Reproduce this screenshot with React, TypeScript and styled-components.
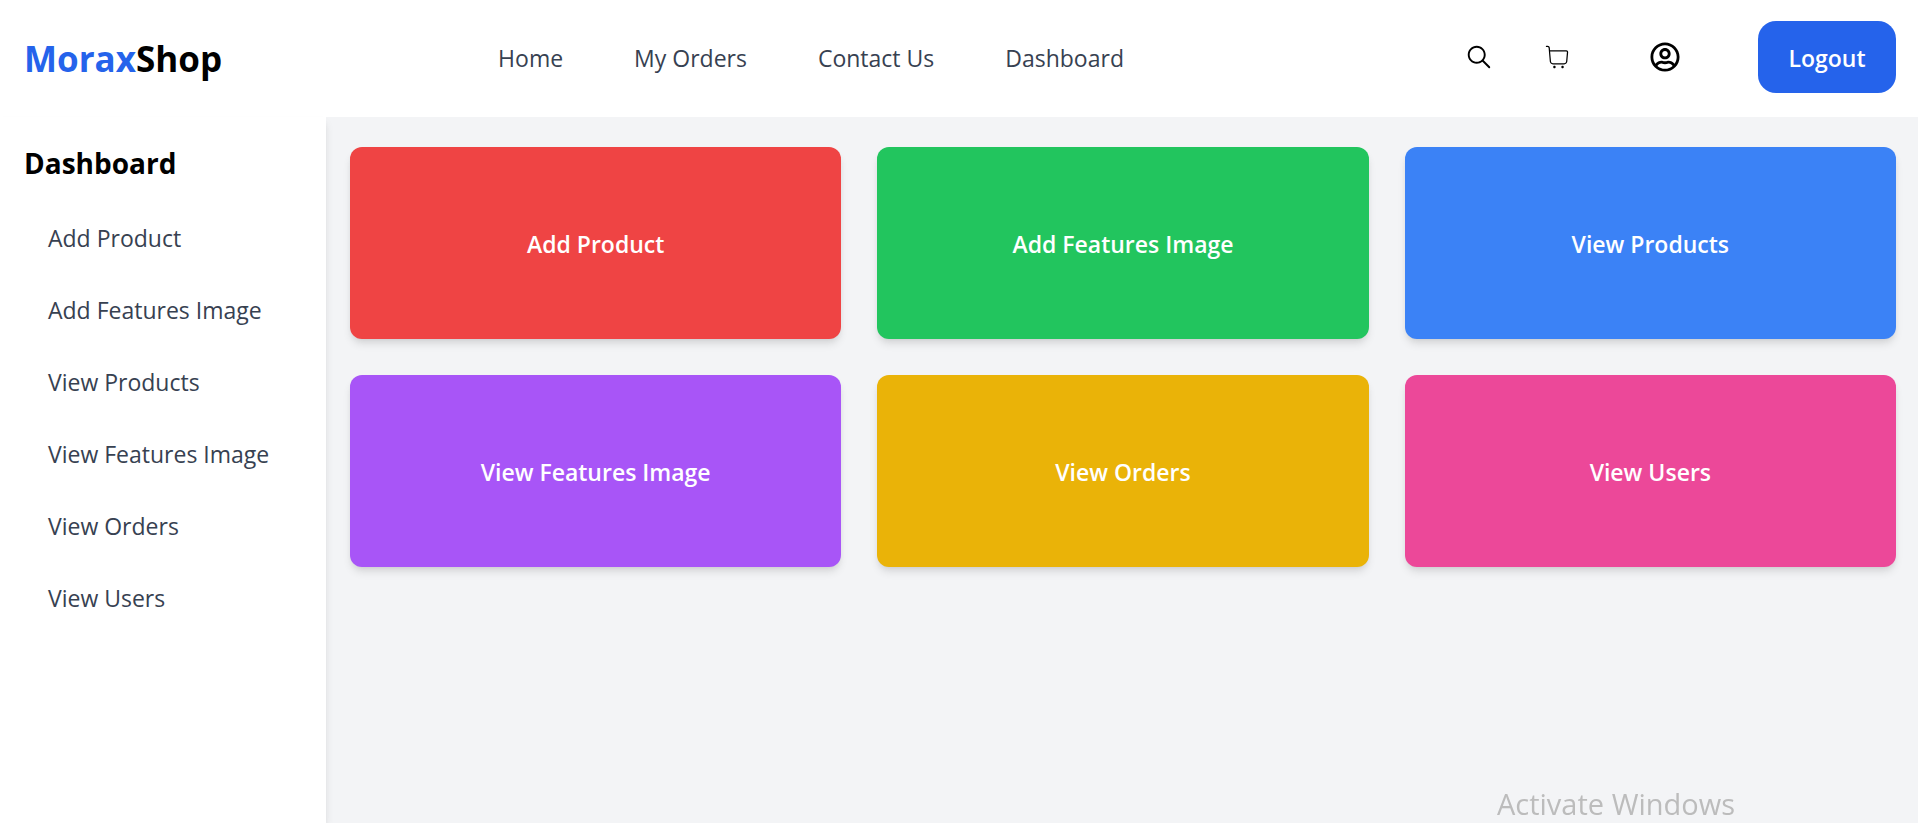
import React from "react";
import styled, { createGlobalStyle } from "styled-components";
import { IoIosSearch } from "react-icons/io";
import { CiShoppingCart } from "react-icons/ci";
import { FaRegUserCircle } from "react-icons/fa";

const GlobalStyle = createGlobalStyle`
  *, *::before, *::after {
    box-sizing: border-box;
  }
  body {
    margin: 0;
    background: #ffffff;
    color: #000000;
    font-family: "Segoe UI", "Open Sans", "Noto Sans", sans-serif;
    font-size: 23px;
    line-height: 36px;
  }
  a {
    color: inherit;
    text-decoration: none;
  }
`;

const Page = styled.div`
  display: flex;
  flex-direction: column;
  min-height: 100vh;
`;

const Header = styled.header`
  display: flex;
  align-items: center;
  justify-content: space-between;
  padding: 21px 22px 24px 24px;
`;

const Logo = styled.a`
  padding-top: 4px;
  font-size: 35px;
  font-weight: 700;
`;

const LogoAccent = styled.span`
  color: #2563eb;
`;

const Nav = styled.nav`
  display: flex;
  gap: 71px;
  margin-right: 64px;
  padding-top: 2px;
  color: #374151;
`;

const Actions = styled.div`
  display: flex;
  align-items: center;
`;

const IconButton = styled.button<{ $gap: number }>`
  display: flex;
  margin: 0 ${(p) => p.$gap}px 0 0;
  padding: 0;
  border: 0;
  background: none;
  color: #000000;
  font-size: 30px;
  cursor: pointer;
`;

const LogoutButton = styled.button`
  min-width: 138px;
  padding: 19px 30px 17px;
  border: 0;
  border-radius: 18px;
  background: #2563eb;
  color: #ffffff;
  font: inherit;
  font-weight: 600;
  cursor: pointer;
`;

const Body = styled.div`
  display: flex;
  flex: 1;
`;

const Sidebar = styled.aside`
  flex: none;
  width: 326px;
  padding: 24px;
  background: #ffffff;
  box-shadow: 0 6px 9px -1px rgba(0, 0, 0, 0.1), 0 3px 6px -3px rgba(0, 0, 0, 0.1);
  z-index: 1;
`;

const SidebarTitle = styled.h2`
  margin: 0 0 17px;
  font-size: 28px;
  line-height: 44px;
  font-weight: 700;
`;

const SidebarLink = styled.a`
  display: block;
  padding: 18px 24px;
  color: #374151;
`;

const Main = styled.main`
  flex: 1;
  padding: 30px 22px 30px 24px;
  background: #f3f4f6;
`;

const CardGrid = styled.div`
  display: grid;
  grid-template-columns: repeat(3, 1fr);
  gap: 36px;
`;

const Card = styled.a<{ $color: string }>`
  display: flex;
  align-items: center;
  justify-content: center;
  height: 192px;
  padding-top: 2px;
  border-radius: 12px;
  background: ${(p) => p.$color};
  box-shadow: 0 6px 9px -1px rgba(0, 0, 0, 0.1), 0 3px 6px -3px rgba(0, 0, 0, 0.1);
  color: #ffffff;
  font-weight: 600;
`;

const Watermark = styled.div`
  position: fixed;
  right: 183px;
  bottom: 1px;
  z-index: 2;
  color: #bcbcbc;
  font-size: 29px;
  pointer-events: none;
`;

const navItems = ["Home", "My Orders", "Contact Us", "Dashboard"];

const sections = [
  { label: "Add Product", color: "#ef4444" },
  { label: "Add Features Image", color: "#22c55e" },
  { label: "View Products", color: "#3b82f6" },
  { label: "View Features Image", color: "#a855f7" },
  { label: "View Orders", color: "#eab308" },
  { label: "View Users", color: "#ec4899" },
];

export default function App() {
  return (
    <Page>
      <GlobalStyle />
      <Header>
        <Logo href="#">
          <LogoAccent>Morax</LogoAccent>Shop
        </Logo>
        <Nav>
          {navItems.map((item) => (
            <a key={item} href="#">
              {item}
            </a>
          ))}
        </Nav>
        <Actions>
          <IconButton type="button" aria-label="Search" $gap={48}>
            <IoIosSearch />
          </IconButton>
          <IconButton type="button" aria-label="Cart" $gap={78}>
            <CiShoppingCart />
          </IconButton>
          <IconButton type="button" aria-label="Account" $gap={78}>
            <FaRegUserCircle />
          </IconButton>
          <LogoutButton type="button">Logout</LogoutButton>
        </Actions>
      </Header>
      <Body>
        <Sidebar>
          <SidebarTitle>Dashboard</SidebarTitle>
          <nav>
            {sections.map(({ label }) => (
              <SidebarLink key={label} href="#">
                {label}
              </SidebarLink>
            ))}
          </nav>
        </Sidebar>
        <Main>
          <CardGrid>
            {sections.map(({ label, color }) => (
              <Card key={label} href="#" $color={color}>
                {label}
              </Card>
            ))}
          </CardGrid>
        </Main>
      </Body>
      <Watermark>Activate Windows</Watermark>
    </Page>
  );
}
